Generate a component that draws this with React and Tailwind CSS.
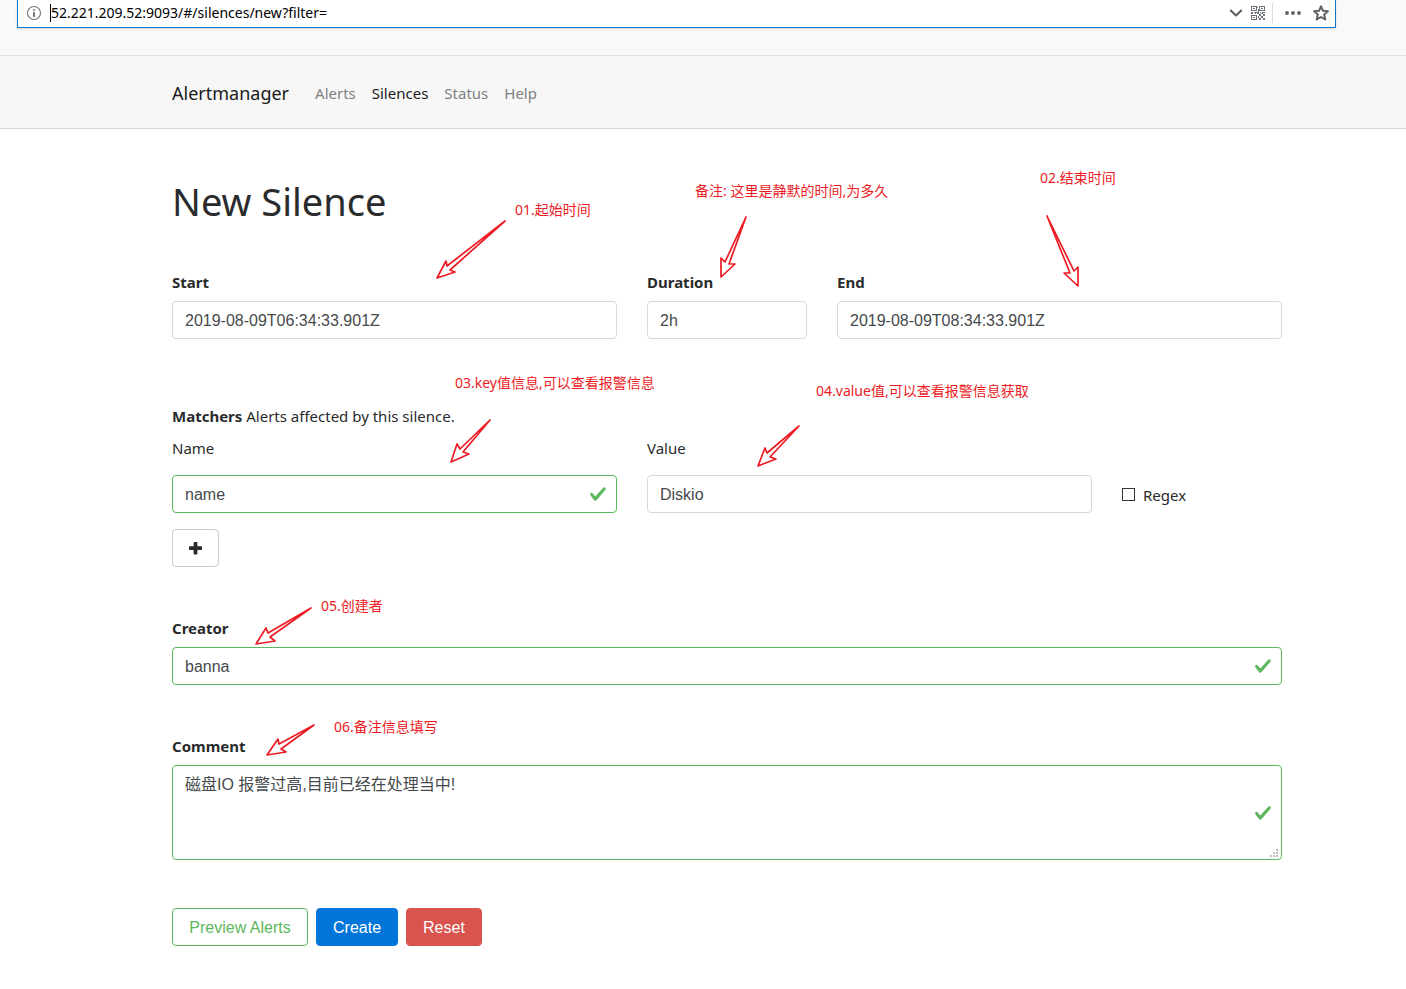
import React from "react";

const CHECK =
  "M2.3 6.73L.6 4.53c-.4-1.04.46-1.4 1.1-.8l1.1 1.4 3.4-3.8c.6-.63 1.6-.27 1.2.7l-4 4.6c-.43.5-.8.4-1.1.1z";

function Check() {
  return (
    <svg
      viewBox="0 0 8 8"
      className="pointer-events-none absolute right-2.5 top-1/2 size-[18px] -translate-y-1/2"
      aria-hidden="true"
    >
      <path d={CHECK} fill="#5cb85c" />
    </svg>
  );
}

function TextField({ id, label, value, valid, labelClass = "mb-2 font-bold" }) {
  return (
    <>
      <label htmlFor={id} className={`block pt-0.5 leading-[22px] ${labelClass}`}>
        {label}
      </label>
      <div className="relative">
        <input
          id={id}
          type="text"
          defaultValue={value}
          className={`block h-[38px] w-full rounded border bg-white px-3 pt-0.5 font-['Liberation_Sans',Arial,sans-serif] text-base text-[#464a4c] outline-none ${
            valid ? "border-[#5cb85c]" : "border-[#d9d9d9]"
          }`}
        />
        {valid && <Check />}
      </div>
    </>
  );
}

/* Red hand-placed remark: a caption plus an outlined arrow over the form. */
function Note({ text, textPos, arrowPos, width, height, points }) {
  return (
    <>
      <span
        className={`pointer-events-none absolute whitespace-nowrap text-sm leading-5 text-[#ed1c24] ${textPos}`}
      >
        {text}
      </span>
      <svg
        className={`pointer-events-none absolute z-10 ${arrowPos}`}
        width={width}
        height={height}
        viewBox={`0 0 ${width} ${height}`}
        aria-hidden="true"
      >
        <polygon
          points={points}
          fill="none"
          stroke="#ed1c24"
          strokeWidth="1.7"
          strokeLinejoin="round"
        />
      </svg>
    </>
  );
}

function AddressBar() {
  return (
    <header className="h-14 border-b border-[#e0e0e1] bg-[#f9f9fa] pl-[17px] pr-[70px]">
      <div className="flex h-7 items-center border border-t-0 border-[#0a76ce] bg-white pb-0.5 pl-2 pr-1.5 shadow-sm">
        <svg viewBox="0 0 16 16" className="size-4 shrink-0" fill="none" aria-hidden="true">
          <circle cx="8" cy="8" r="6.5" stroke="#737373" strokeWidth="1.1" />
          <rect x="7" y="4" width="2" height="2" rx="1" fill="#737373" />
          <rect x="7" y="7" width="2" height="5" rx="0.8" fill="#737373" />
        </svg>
        <span className="ml-2 h-[18px] w-px bg-black" />
        <input
          aria-label="Address"
          defaultValue="52.221.209.52:9093/#/silences/new?filter="
          className="min-w-0 flex-1 bg-transparent text-sm leading-5 text-black outline-none"
        />
        <button type="button" aria-label="Show history" className="mr-2">
          <svg viewBox="0 0 14 14" className="size-3.5" fill="none">
            <path d="M1.8 4.5L7 9.5l5.200-5" stroke="#5f5f61" strokeWidth="2.1" strokeLinecap="round" strokeLinejoin="round" />
          </svg>
        </button>
        <button type="button" aria-label="QR code">
          <svg viewBox="0 0 14 14" className="size-3.5" fill="#6b7079">
            <path fillRule="evenodd" d="M0 0h6v5H0zM1 1v3h4V1zM8 0h6v5H8zM9 1v3h4V1zM0 9h6v5H0zM1 10v3h4v-3z" />
            <path d="M2 2h2v1H2zM10 2h2v1h-2zM2 11h2v1H2zM6 1h1v1H6zM7 3h1v3H7zM0 6h2v2H0zM3 6h3v1H3zM6 6h2v2H6zM9 6h1v1H9zM11 6h3v1h-3zM4 7h1v1H4zM8 8h2v2H8zM12 8h2v2h-2zM10 10h2v2h-2zM7 10h1v2H7zM8 12h2v2H8zM12 12h2v2h-2zM10 7h2v1h-2z" />
          </svg>
        </button>
        <span className="ml-[7px] h-5 w-px bg-[#dcdcdc]" />
        <button type="button" aria-label="Page actions" className="ml-3">
          <svg viewBox="0 0 16 16" className="size-4" fill="#5f5f61">
            <circle cx="2" cy="8" r="1.900" />
            <circle cx="8" cy="8" r="1.900" />
            <circle cx="14" cy="8" r="1.900" />
          </svg>
        </button>
        <button type="button" aria-label="Bookmark this page" className="ml-3">
          <svg viewBox="0 0 16 16" className="size-4" fill="none">
            <path d="M8 1.300l2 4.500 4.900.5-3.700 3.300 1.100 4.900L8 12l-4.300 2.500 1.100-4.900L1.100 6.300l4.900-.5z" stroke="#5f5f61" strokeWidth="2" strokeLinejoin="round" />
          </svg>
        </button>
      </div>
    </header>
  );
}

export default function App() {
  return (
    <div className="min-h-screen bg-white font-['Noto_Sans','Noto_Sans_CJK_SC',sans-serif] text-[15px] leading-6 text-[#292b2c]">
      <AddressBar />
      <nav className="border-b border-[#d9d9d9] bg-[#f7f7f7]">
        <div className="ml-[172px] flex h-[72px] items-center gap-4 pt-0.5">
          <a href="#/" className="mr-2.5 text-lg text-[#1a1a1a]">Alertmanager</a>
          <a href="#/alerts" className="text-[#808080]">Alerts</a>
          <a href="#/silences" className="text-[#1a1a1a]">Silences</a>
          <a href="#/status" className="text-[#808080]">Status</a>
          <a href="#/help" className="text-[#808080]">Help</a>
        </div>
      </nav>

      <main className="ml-[172px] mr-8 max-w-[1110px] pb-10 pt-12">
        <h1 className="mb-11 text-[38px] leading-[48px]">New Silence</h1>

        <form onSubmit={(e) => e.preventDefault()}>
          <div className="grid grid-cols-12 gap-x-[30px]">
            <div className="relative col-span-5">
              <TextField id="start" label="Start" value="2019-08-09T06:34:33.901Z" />
              <Note
                text="01.起始时间"
                textPos="left-[343px] -top-[69px]"
                arrowPos="left-[263px] -top-[50px]"
                width={72}
                height={61}
                points="70,2 12,47 11,42 2,59 20,53 15,51"
              />
            </div>
            <div className="relative col-span-2">
              <TextField id="duration" label="Duration" value="2h" />
              <Note
                text="备注: 这里是静默的时间,为多久"
                textPos="left-12 -top-[88px]"
                arrowPos="left-[72px] -top-[54px]"
                width={29}
                height={64}
                points="27,2 6,47 2,43 2,62 16,49 10,49"
              />
            </div>
            <div className="relative col-span-5">
              <TextField id="end" label="End" value="2019-08-09T08:34:33.901Z" />
              <Note
                text="02.结束时间"
                textPos="left-[203px] -top-[101px]"
                arrowPos="left-[208px] -top-[55px]"
                width={35}
                height={74}
                points="2,2 25,59 19,59 33,72 33,53 29,57"
              />
            </div>
          </div>

          <p className="mb-2 mt-16 pt-0.5 leading-[22px]">
            <strong>Matchers</strong> Alerts affected by this silence.
          </p>
          <div className="grid grid-cols-12 items-end gap-x-[30px]">
            <div className="relative col-span-5">
              <TextField id="matcher-name" label="Name" labelClass="mb-4" value="name" valid />
              <Note
                text="03.key值信息,可以查看报警信息"
                textPos="left-[283px] -top-[62px]"
                arrowPos="left-[277px] -top-[17px]"
                width={44}
                height={46}
                points="41,2 11,31 8,26 2,44 20,36 14,34"
              />
            </div>
            <div className="relative col-span-5">
              <TextField id="matcher-value" label="Value" labelClass="mb-4" value="Diskio" />
              <Note
                text="04.value值,可以查看报警信息获取"
                textPos="left-[169px] -top-[54px]"
                arrowPos="left-[109px] -top-[11px]"
                width={46}
                height={44}
                points="43,2 11,29 9,24 2,42 20,35 14,33"
              />
            </div>
            <label className="col-span-2 flex h-[38px] items-center gap-2">
              <input
                type="checkbox"
                className="size-[13px] appearance-none border border-[#333333] bg-white checked:bg-[#333333]"
              />
              <span className="pt-0.5">Regex</span>
            </label>
          </div>
          <button
            type="button"
            aria-label="Add matcher"
            className="mt-4 flex h-[38px] w-[47px] items-center justify-center rounded border border-[#cccccc] bg-white"
          >
            <svg viewBox="0 0 13 13" className="size-[13px]" fill="#292b2c">
              <rect x="4.600" y="0" width="3.800" height="12.500" rx="0.700" />
              <rect x="0" y="4.300" width="13" height="3.800" rx="0.700" />
            </svg>
          </button>

          <div className="relative mt-12">
            <TextField id="creator" label="Creator" value="banna" valid />
            <Note
              text="05.创建者"
              textPos="left-[149px] -top-[19px]"
              arrowPos="left-[82px] -top-[9px]"
              width={59}
              height={40}
              points="57,2 14,27 12,22 2,38 21,35 16,31"
            />
          </div>

          <div className="relative mt-12">
            <label htmlFor="comment" className="mb-2 block pt-0.5 font-bold leading-[22px]">
              Comment
            </label>
            <div className="relative">
              <textarea
                id="comment"
                defaultValue="磁盘IO 报警过高,目前已经在处理当中!"
                className="block h-[95px] w-full resize-none rounded border border-[#5cb85c] bg-white px-3 py-[7px] font-['Liberation_Sans','Noto_Sans_CJK_SC',sans-serif] text-base text-[#464a4c] outline-none"
              />
              <Check />
              <svg
                viewBox="0 0 8 8"
                className="pointer-events-none absolute bottom-[3px] right-1 size-2"
                fill="#bfbfbf"
                aria-hidden="true"
              >
                <path d="M6 0h2v2H6zM3 3h2v2H3zM6 3h2v2H6zM0 6h2v2H0zM3 6h2v2H3zM6 6h2v2H6z" />
              </svg>
            </div>
            <Note
              text="06.备注信息填写"
              textPos="left-[162px] -top-[16px]"
              arrowPos="left-[93px] -top-[10px]"
              width={51}
              height={34}
              points="49,2 14,21 13,16 2,32 21,29 16,26"
            />
          </div>

          <div className="mt-12 flex gap-2 font-['Liberation_Sans',Arial,sans-serif] text-base">
            <button type="button" className="h-[38px] w-[136px] rounded border border-[#5cb85c] bg-white pt-0.5 text-[#5cb85c]">
              Preview Alerts
            </button>
            <button type="submit" className="h-[38px] rounded border border-[#0275d8] bg-[#0275d8] px-4 pt-0.5 text-white">
              Create
            </button>
            <button type="reset" className="h-[38px] rounded border border-[#d9534f] bg-[#d9534f] px-4 pt-0.5 text-white">
              Reset
            </button>
          </div>
        </form>
      </main>
    </div>
  );
}
